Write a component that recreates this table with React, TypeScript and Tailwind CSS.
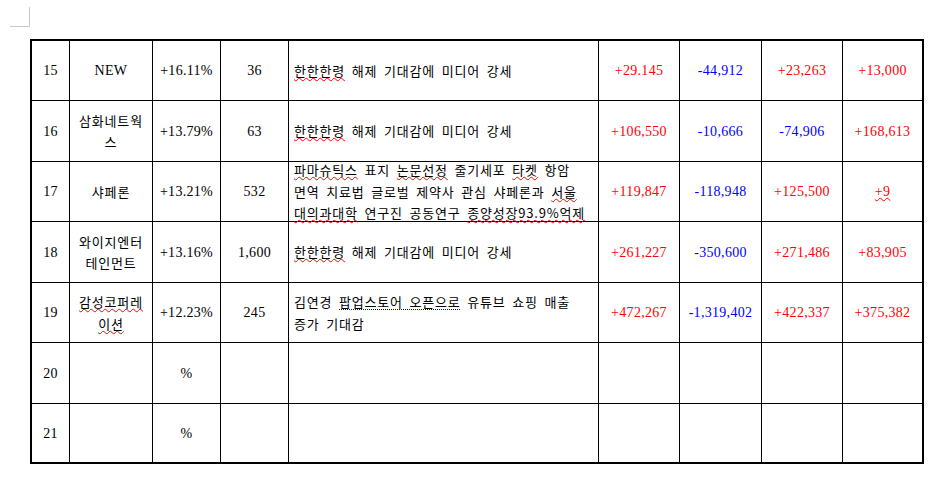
import React from "react";

const R = "text-[#ff0000]";
const B = "text-[#0000ff]";

const num = "font-['Liberation_Serif','Noto_Sans_CJK_KR',serif] text-[14px] tracking-[0.3px]";
const kor = "font-['Noto_Sans_CJK_KR',sans-serif] text-[13px] leading-[21.5px] tracking-[0.8px] [word-spacing:3px]";

function Red({ children }: { children: React.ReactNode }) {
  return (
    <span className="underline decoration-wavy decoration-[#ff0000] decoration-1 underline-offset-[1px] [text-decoration-skip-ink:none]">
      {children}
    </span>
  );
}

function Blue({ children }: { children: React.ReactNode }) {
  return (
    <span className="underline decoration-dotted decoration-[#0000ff] decoration-1 underline-offset-[2px] [text-decoration-skip-ink:none]">
      {children}
    </span>
  );
}

type Row = {
  no: string;
  name: React.ReactNode;
  pct: string;
  vol: string;
  news: React.ReactNode;
  vals: [string, string][];
};

const hh = (
  <>
    <Red>한한한령</Red> 해제 기대감에 미디어 강세
  </>
);

const rows: Row[] = [
  {
    no: "15",
    name: <span className={num}>NEW</span>,
    pct: "+16.11%",
    vol: "36",
    news: hh,
    vals: [
      ["+29.145", R],
      ["-44,912", B],
      ["+23,263", R],
      ["+13,000", R],
    ],
  },
  {
    no: "16",
    name: (
      <span className={kor}>
        삼화네트웍
        <br />스
      </span>
    ),
    pct: "+13.79%",
    vol: "63",
    news: hh,
    vals: [
      ["+106,550", R],
      ["-10,666", B],
      ["-74,906", B],
      ["+168,613", R],
    ],
  },
  {
    no: "17",
    name: <span className={kor}>샤페론</span>,
    pct: "+13.21%",
    vol: "532",
    news: (
      <>
        <Red>파마슈틱스</Red> 표지 <Red>논문선정</Red> 줄기세포 <Red>타켓</Red> 항암
        <br />
        면역 치료법 글로벌 제약사 관심 샤페론과 <Red>서울</Red>
        <br />
        <Red>대의과대학</Red> 연구진 공동연구 <Red>종양성장93.9%억제</Red>
      </>
    ),
    vals: [
      ["+119,847", R],
      ["-118,948", B],
      ["+125,500", R],
      ["+9", R],
    ],
  },
  {
    no: "18",
    name: (
      <span className={kor}>
        와이지엔터
        <br />
        테인먼트
      </span>
    ),
    pct: "+13.16%",
    vol: "1,600",
    news: hh,
    vals: [
      ["+261,227", R],
      ["-350,600", B],
      ["+271,486", R],
      ["+83,905", R],
    ],
  },
  {
    no: "19",
    name: (
      <span className={kor}>
        <Red>감성코퍼레</Red>
        <br />
        <Red>이션</Red>
      </span>
    ),
    pct: "+12.23%",
    vol: "245",
    news: (
      <>
        김연경 <Blue>팝업스토어 오픈으로</Blue> 유튜브 쇼핑 매출
        <br />
        증가 기대감
      </>
    ),
    vals: [
      ["+472,267", R],
      ["-1,319,402", B],
      ["+422,337", R],
      ["+375,382", R],
    ],
  },
  {
    no: "20",
    name: null,
    pct: "%",
    vol: "",
    news: null,
    vals: [
      ["", ""],
      ["", ""],
      ["", ""],
      ["", ""],
    ],
  },
  {
    no: "21",
    name: null,
    pct: "%",
    vol: "",
    news: null,
    vals: [
      ["", ""],
      ["", ""],
      ["", ""],
      ["", ""],
    ],
  },
];

export default function App() {
  return (
    <div className="w-[934px] h-[481px] bg-white flex flex-col overflow-hidden">
      <div className="ml-[10px] mt-[7px] w-[20px] h-[20px] border-r border-b border-[#c8c8c8]" />
      <div className="ml-[30px] mt-[12px] w-[894px] border-2 border-black">
        <div className="grid grid-cols-[38px_83px_68px_68px_310px_81px_82px_81px_79px] grid-rows-[60px_61px_60px_61px_60px_61px_58px] text-black">
          {rows.map((r, ri) => {
            const last = ri === rows.length - 1;
            const bb = last ? "" : "border-b";
            const cell = `border-r border-black ${bb} flex items-center justify-center text-center`;
            return (
              <React.Fragment key={r.no}>
                <div className={`${cell} ${num}`}>{r.no}</div>
                <div className={`${cell}`}>{r.name}</div>
                <div className={`${cell} ${num}`}>{r.pct}</div>
                <div className={`${cell} ${num}`}>{r.vol}</div>
                <div className={`border-r border-black ${bb} flex items-center justify-start pl-[5px] whitespace-nowrap ${kor}`}>
                  <div>{r.news}</div>
                </div>
                {r.vals.map(([v, c], vi) => (
                  <div
                    key={vi}
                    className={`${vi === 3 ? "" : "border-r"} border-black ${bb} flex items-center justify-center ${num} ${c}`}
                  >
                    {v === "+9" ? <Red>{v}</Red> : v}
                  </div>
                ))}
              </React.Fragment>
            );
          })}
        </div>
      </div>
    </div>
  );
}
